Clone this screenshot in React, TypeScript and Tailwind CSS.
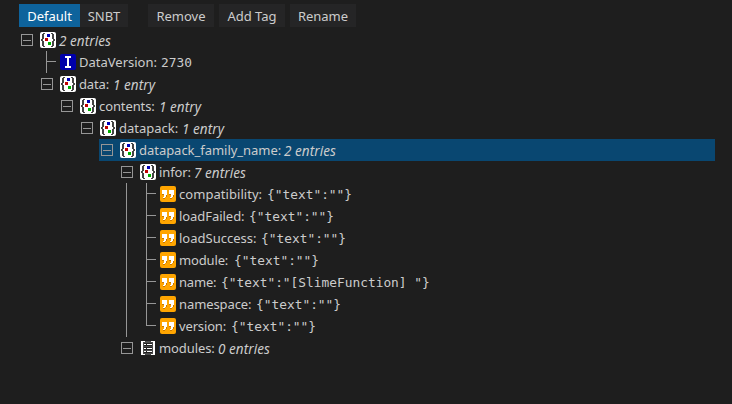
import React from "react";

type Kind = "compound" | "int" | "string" | "list";
type Node = {
  depth: number;
  kind: Kind;
  name?: string;
  nameWidth?: string;
  info?: string;
  value?: string;
  toggle?: boolean;
  last?: boolean;
  guide?: boolean;
  selected?: boolean;
};

const nodes: Node[] = [
  { depth: 0, kind: "compound", info: "2 entries", toggle: true },
  { depth: 1, kind: "int", name: "DataVersion:", nameWidth: "w-[78px] tracking-[0px]", value: "2730" },
  { depth: 1, kind: "compound", name: "data:", nameWidth: "w-[31px] tracking-[-0.15px]", info: "1 entry", toggle: true },
  { depth: 2, kind: "compound", name: "contents:", nameWidth: "w-[57px] tracking-[-0.1px]", info: "1 entry", toggle: true },
  { depth: 3, kind: "compound", name: "datapack:", nameWidth: "w-[60px] tracking-[0px]", info: "1 entry", toggle: true },
  { depth: 4, kind: "compound", name: "datapack_family_name:", nameWidth: "w-[142px] tracking-[-0.03px]", info: "2 entries", toggle: true, selected: true },
  { depth: 5, kind: "compound", name: "infor:", nameWidth: "w-[32px] tracking-[-0.1px]", info: "7 entries", toggle: true },
  { depth: 6, kind: "string", name: "compatibility:", nameWidth: "w-[84px] tracking-[0.05px]", value: '{"text":""}', guide: true },
  { depth: 6, kind: "string", name: "loadFailed:", nameWidth: "w-[66px] tracking-[-0.05px]", value: '{"text":""}', guide: true },
  { depth: 6, kind: "string", name: "loadSuccess:", nameWidth: "w-[78px] tracking-[0px]", value: '{"text":""}', guide: true },
  { depth: 6, kind: "string", name: "module:", nameWidth: "w-[51px] tracking-[-0.15px]", value: '{"text":""}', guide: true },
  { depth: 6, kind: "string", name: "name:", nameWidth: "w-[38px] tracking-[-0.2px]", value: '{"text":"[SlimeFunction] "}', guide: true },
  { depth: 6, kind: "string", name: "namespace:", nameWidth: "w-[73px] tracking-[-0.1px]", value: '{"text":""}', guide: true },
  { depth: 6, kind: "string", name: "version:", nameWidth: "w-[48px] tracking-[-0.15px]", value: '{"text":""}', guide: true, last: true },
  { depth: 5, kind: "list", name: "modules:", nameWidth: "w-[56px] tracking-[-0.1px]", info: "0 entries", toggle: true },
];

function Icon({ kind }: { kind: Kind }) {
  return (
    <svg className="block h-4 w-4 shrink-0" viewBox="0 0 16 16" shapeRendering="crispEdges">
      {kind === "compound" && (
        <>
          <rect width="16" height="16" rx="2" fill="#fff" shapeRendering="auto" />
          <path d="M3 1h2v1H3zM2 2h2v5H2zM1 7h2v2H1zM2 9h2v5H2zM3 14h2v1H3zM11 1h2v1h-2zM12 2h2v5h-2zM13 7h2v2h-2zM12 9h2v5h-2zM11 14h2v1h-2z" fill="#444" />
          <path d="M7 2h3v3H7z" fill="#0000b8" />
          <path d="M5 6h3v3H5z" fill="#c00000" />
          <path d="M8 10h3v3H8z" fill="#00b000" />
        </>
      )}
      {kind === "int" && (
        <>
          <rect width="16" height="16" rx="2" fill="#0000aa" shapeRendering="auto" />
          <path d="M5 2h6v2H9v8h2v2H5v-2h2V4H5z" fill="#fff" />
        </>
      )}
      {kind === "string" && (
        <>
          <rect width="16" height="16" rx="2" fill="#ffa500" shapeRendering="auto" />
          <path d="M2 4h5v5H6v2H5v1H3v-1h1V9H2zM9 4h5v5h-1v2h-1v1h-2v-1h1V9H9z" fill="#fff" />
          <path d="M2 8h2v1H2zM6 9h1v2H6zM3 12h2v1H3zM9 8h2v1H9zM13 9h1v2h-1zM10 12h2v1h-2z" fill="#c87800" />
        </>
      )}
      {kind === "list" && (
        <>
          <path d="M3 1h10v14H3z" fill="#4a4a4a" />
          <path d="M1 1h4v1H3v12h2v1H1zM11 1h4v14h-4v-1h2V2h-2z" fill="#fff" />
          <path d="M4 3h8v3H4zM4 7h8v3H4zM4 11h8v2H4z" fill="#222" />
          <path d="M4 4h2v1H4zM7 4h5v1H7zM4 8h2v1H4zM7 8h5v1H7zM4 11h2v1H4zM7 11h5v1H7z" fill="#fff" />
        </>
      )}
    </svg>
  );
}

function Toggle() {
  return (
    <span className="mr-[7px] flex h-3 w-3 shrink-0 items-center justify-center border border-[#969696]">
      <span className="h-px w-2 bg-[#969696]" />
    </span>
  );
}

function Branch({ last }: { last?: boolean }) {
  return (
    <svg className="block h-[22px] w-[19px] shrink-0" viewBox="0 0 19 22" shapeRendering="crispEdges">
      <path d={last ? "M5.5 0V10.5H15" : "M5.5 0V22M5.5 10.5H15"} fill="none" stroke="#969696" />
    </svg>
  );
}

const indents = ["w-0", "w-5", "w-10", "w-[60px]", "w-20", "w-[100px]", "w-[120px]"];

function Row({ node }: { node: Node }) {
  return (
    <div className="flex h-[22px] pl-[21px]">
      <div className={`${indents[node.depth]} flex shrink-0 justify-end`}>
        {node.guide && <span className="mr-[14px] h-full w-px bg-[#969696]" />}
      </div>
      <div className={`flex h-[22px] items-center whitespace-nowrap ${node.selected ? "-ml-[2px] w-[616px] bg-[#094771] pl-[2px]" : ""}`}>
        {node.toggle ? <Toggle /> : <Branch last={node.last} />}
        <Icon kind={node.kind} />
        <span className="ml-[3px] flex h-[22px] items-baseline">
          {node.name && <span className={node.nameWidth}>{node.name}</span>}
          {node.info && <span className={`${node.name ? "ml-[3px]" : ""} translate-y-px text-[13.5px] leading-[22px] tracking-[0.05px] italic`}>{node.info}</span>}
          {node.value && <span className="ml-1 whitespace-pre font-['DejaVu_Sans_Mono',monospace] text-[12.85px]">{node.value}</span>}
        </span>
      </div>
    </div>
  );
}

export default function App() {
  const btn = "flex h-[23px] items-center justify-center whitespace-nowrap bg-[#252526]";
  return (
    <main className="h-[404px] w-[732px] overflow-hidden bg-[#1e1e1e] pt-1 font-['Noto_Sans',sans-serif] text-[13px] leading-[22px] text-[#cccccc]">
      <div className="flex pl-[19px]">
        <button className="flex h-[23px] w-[61px] items-center justify-center bg-[#0e639c] text-white">Default</button>
        <button className={`${btn} w-12`}>SNBT</button>
        <button className={`${btn} ml-5 w-[66px]`}>Remove</button>
        <button className={`${btn} ml-[5px] w-[66px]`}>Add Tag</button>
        <button className={`${btn} ml-[5px] w-[66px]`}>Rename</button>
      </div>
      <div className="pt-[2px]">
        {nodes.map((node, i) => (
          <Row key={i} node={node} />
        ))}
      </div>
    </main>
  );
}
